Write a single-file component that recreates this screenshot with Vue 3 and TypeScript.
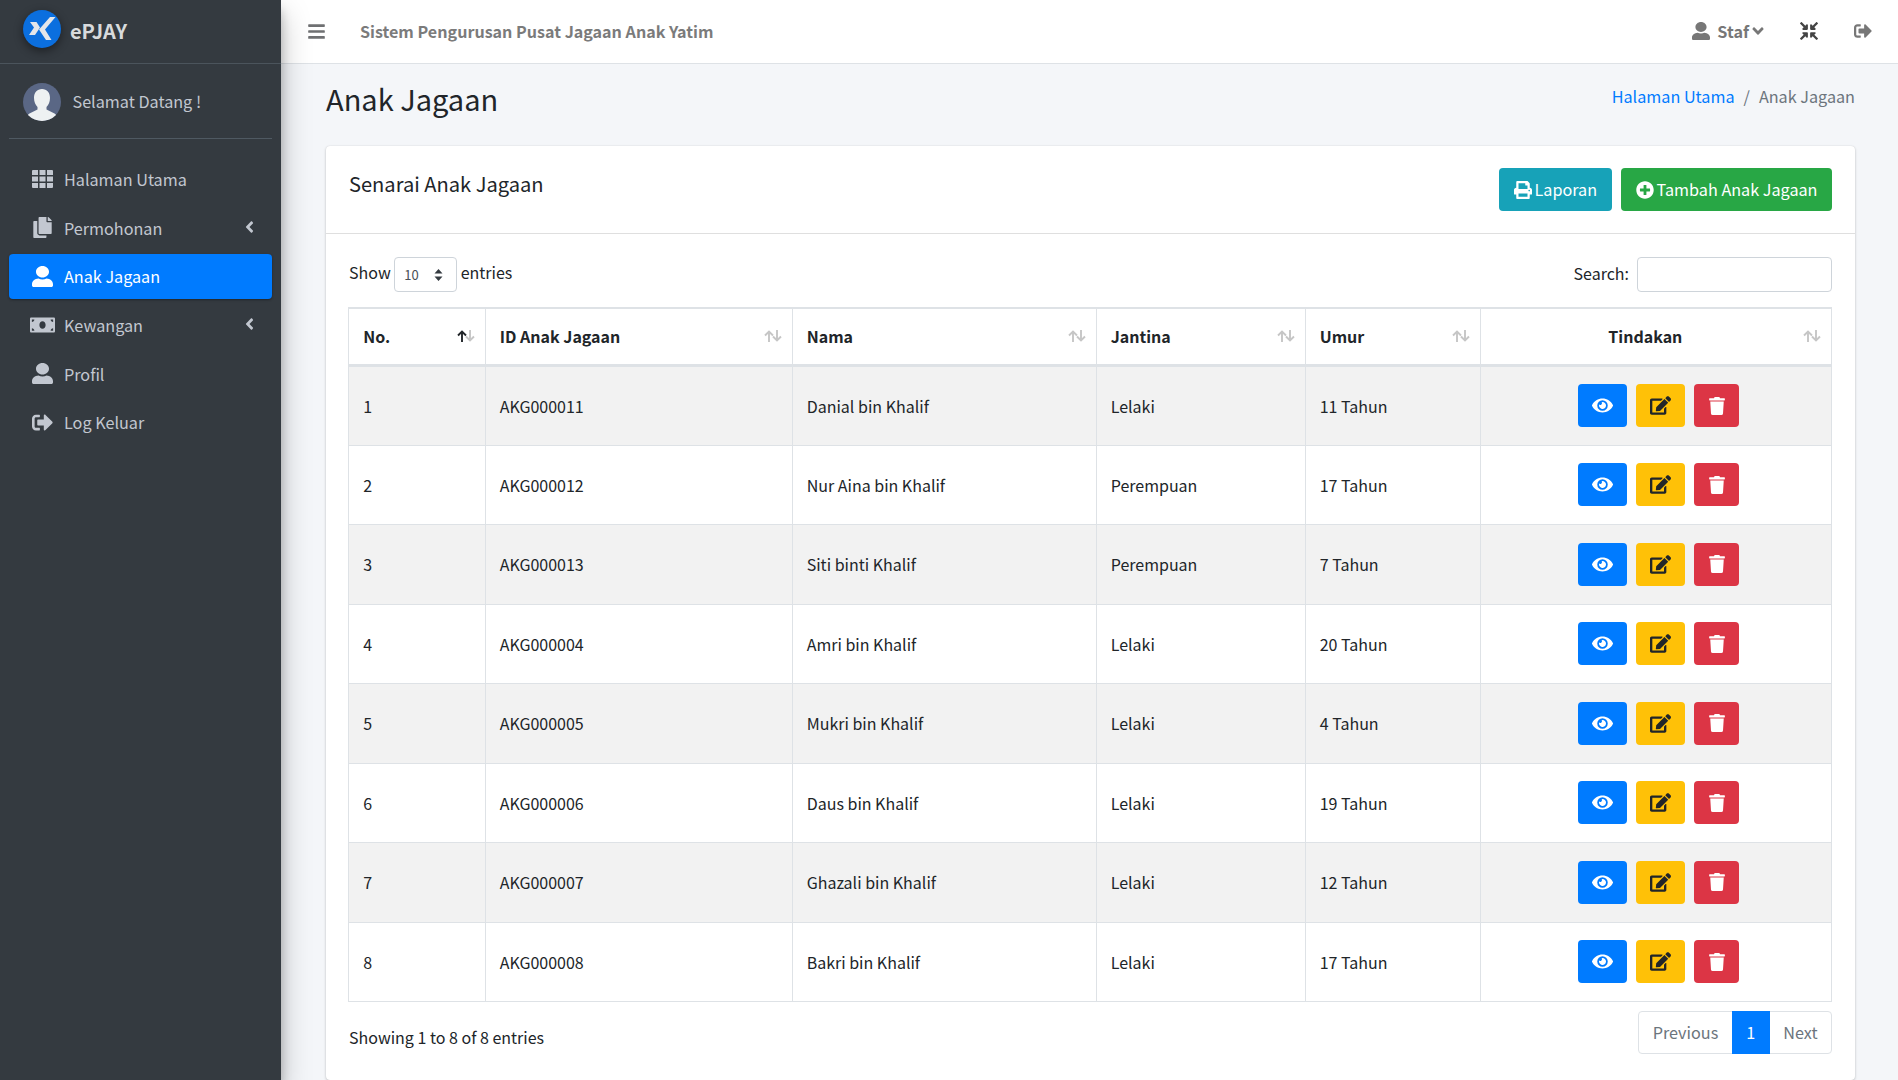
<script setup lang="ts">
type Icon = { vb: string; d: string }
const icons: Record<string, Icon> = {
  grid: { vb: '0 0 21 18', d: 'M0 1a1 1 0 0 1 1-1h5v5H0zM7.5 0h6v5h-6zM15 0h5a1 1 0 0 1 1 1v4h-6zM0 6.5h6v5H0zM7.5 6.5h6v5h-6zM15 6.5h6v5h-6zM0 13h6v5H1a1 1 0 0 1-1-1zM7.5 13h6v5h-6zM15 13h6v4a1 1 0 0 1-1 1h-5z' },
  copy: { vb: '0 0 448 512', d: 'M320 448v40c0 13.255-10.745 24-24 24H24c-13.255 0-24-10.745-24-24V120c0-13.255 10.745-24 24-24h72v296c0 30.879 25.121 56 56 56h168zm0-344V0H152c-13.255 0-24 10.745-24 24v368c0 13.255 10.745 24 24 24h272c13.255 0 24-10.745 24-24V128H344c-13.2 0-24-10.8-24-24zm120.971-31.029L375.029 7.029A24 24 0 0 0 358.059 0H352v96h96v-6.059a24 24 0 0 0-7.029-16.97z' },
  user: { vb: '0 0 20 20', d: 'M10 0c3.4 0 6.2 2.4 6.2 5.500S13.400 11 10 11 3.800 8.600 3.800 5.500 6.600 0 10 0zM6.200 12c1.100.6 2.400.9 3.800.9s2.700-.3 3.800-.9C17.300 12.200 20 14.500 20 17.200V18.500c0 .8-.7 1.500-1.500 1.500H1.500C.7 20 0 19.300 0 18.500v-1.300C0 14.500 2.700 12.200 6.200 12z' },
  money: { vb: '0 0 640 512', d: 'M608 64H32C14.33 64 0 78.33 0 96v320c0 17.67 14.33 32 32 32h576c17.67 0 32-14.33 32-32V96c0-17.67-14.33-32-32-32zM48 400v-64c35.35 0 64 28.65 64 64H48zm0-224v-64h64c0 35.35-28.65 64-64 64zm272 176c-44.19 0-80-42.99-80-96 0-53.02 35.82-96 80-96s80 42.98 80 96c0 53.03-35.83 96-80 96zm272 48h-64c0-35.35 28.65-64 64-64v64zm0-224c-35.35 0-64-28.65-64-64h64v64z' },
  signout: { vb: '0 0 512 512', d: 'M497 273L329 441c-15 15-41 4.5-41-17v-96H152c-13.3 0-24-10.7-24-24v-96c0-13.3 10.7-24 24-24h136V88c0-21.4 25.9-32 41-17l168 168c9.3 9.4 9.300 24.600 0 34zM192 436v-40c0-6.6-5.4-12-12-12H96c-17.700 0-32-14.300-32-32V160c0-17.700 14.300-32 32-32h84c6.600 0 12-5.400 12-12V76c0-6.600-5.400-12-12-12H96c-53 0-96 43-96 96v192c0 53 43 96 96 96h84c6.600 0 12-5.400 12-12z' },
  angleLeft: { vb: '0 0 256 512', d: 'M31.7 239l136-136c9.4-9.4 24.6-9.4 33.9 0l22.6 22.6c9.4 9.4 9.4 24.6 0 33.9L127.9 256l96.4 96.4c9.4 9.4 9.4 24.6 0 33.9L201.700 409c-9.400 9.400-24.600 9.400-33.900 0l-136-136c-9.500-9.400-9.500-24.600-.1-34z' },
  angleDown: { vb: '0 0 320 512', d: 'M143 352.3L7 216.3c-9.4-9.4-9.4-24.6 0-33.9l22.6-22.6c9.4-9.4 24.6-9.4 33.9 0l96.4 96.4 96.4-96.4c9.4-9.4 24.6-9.4 33.9 0l22.6 22.6c9.4 9.4 9.4 24.6 0 33.9l-136 136c-9.2 9.4-24.4 9.4-33.8 0z' },
  bars: { vb: '0 0 448 512', d: 'M16 132h416c8.837 0 16-7.163 16-16V76c0-8.837-7.163-16-16-16H16C7.163 60 0 67.163 0 76v40c0 8.837 7.163 16 16 16zm0 160h416c8.837 0 16-7.163 16-16v-40c0-8.837-7.163-16-16-16H16c-8.837 0-16 7.163-16 16v40c0 8.837 7.163 16 16 16zm0 160h416c8.837 0 16-7.163 16-16v-40c0-8.837-7.163-16-16-16H16c-8.837 0-16 7.163-16 16v40c0 8.837 7.163 16 16 16z' },
  compress: { vb: '0 0 512 512', d: 'M200 288H88c-21.4 0-32.1 25.8-17 41l32.9 31-99.2 99.3c-6.2 6.2-6.2 16.4 0 22.6l25.4 25.4c6.2 6.2 16.4 6.2 22.6 0L152 408l31.1 33c15.1 15.1 40.9 4.4 40.9-17V312c0-13.3-10.7-24-24-24zm112-64h112c21.4 0 32.1-25.9 17-41l-33-31 99.3-99.3c6.2-6.2 6.2-16.4 0-22.6L481.9 4.7c-6.2-6.2-16.4-6.2-22.6 0L360 104l-31.1-33C313.8 55.9 288 66.6 288 88v112c0 13.3 10.7 24 24 24zm96 136l33-31.1c15.1-15.1 4.4-40.9-17-40.9H312c-13.3 0-24 10.7-24 24v112c0 21.4 25.9 32.1 41 17l31-32.9 99.3 99.3c6.2 6.2 16.4 6.2 22.6 0l25.4-25.4c6.2-6.2 6.2-16.4 0-22.6L408 360zM183 71.1L152 104 52.7 4.7c-6.2-6.2-16.4-6.2-22.6 0L4.7 30.1c-6.2 6.2-6.2 16.4 0 22.6L104 152l-33 31.1C55.9 198.2 66.6 224 88 224h112c13.3 0 24-10.7 24-24V88c0-21.3-25.9-32-41-16.9z' },
  print: { vb: '0 0 512 512', d: 'M448 192V77.25c0-8.49-3.37-16.62-9.37-22.63L393.37 9.37c-6-6-14.14-9.37-22.63-9.37H96C78.33 0 64 14.33 64 32v160c-35.35 0-64 28.65-64 64v112c0 8.84 7.16 16 16 16h48v96c0 17.67 14.33 32 32 32h320c17.67 0 32-14.33 32-32v-96h48c8.84 0 16-7.16 16-16V256c0-35.35-28.65-64-64-64zm-64 256H128v-96h256v96zm0-224H128V64h192v48c0 8.84 7.16 16 16 16h48v96zm48 72c-13.25 0-24-10.75-24-24 0-13.27 10.75-24 24-24s24 10.73 24 24c0 13.25-10.75 24-24 24z' },
  plus: { vb: '0 0 512 512', d: 'M256 8C119 8 8 119 8 256s111 248 248 248 248-111 248-248S393 8 256 8zm144 276c0 6.6-5.4 12-12 12h-92v92c0 6.6-5.4 12-12 12h-56c-6.6 0-12-5.4-12-12v-92h-92c-6.6 0-12-5.4-12-12v-56c0-6.6 5.4-12 12-12h92v-92c0-6.6 5.4-12 12-12h56c6.6 0 12 5.4 12 12v92h92c6.6 0 12 5.4 12 12v56z' },
  eye: { vb: '0 0 576 512', d: 'M572.52 241.4C518.29 135.59 410.93 64 288 64S57.68 135.64 3.48 241.41a32.35 32.35 0 0 0 0 29.19C57.71 376.41 165.07 448 288 448s230.32-71.64 284.52-177.41a32.35 32.35 0 0 0 0-29.19zM288 400a144 144 0 1 1 144-144 143.93 143.93 0 0 1-144 144zm0-240a95.31 95.31 0 0 0-25.31 3.79 47.85 47.85 0 0 1-66.9 66.9A95.78 95.78 0 1 0 288 160z' },
  edit: { vb: '0 0 576 512', d: 'M402.6 83.2l90.2 90.2c3.8 3.8 3.8 10 0 13.8L274.4 405.6l-92.8 10.3c-12.4 1.4-22.9-9.1-21.5-21.5l10.3-92.8L388.8 83.2c3.8-3.8 10-3.8 13.8 0zm162-22.9l-48.8-48.8c-15.2-15.2-39.9-15.2-55.2 0l-35.4 35.4c-3.8 3.8-3.8 10 0 13.8l90.2 90.2c3.8 3.8 10 3.8 13.8 0l35.4-35.4c15.2-15.3 15.2-40 0-55.2zM384 346.2V448H64V128h229.8c3.2 0 6.2-1.3 8.5-3.5l40-40c7.6-7.6 2.2-20.5-8.5-20.5H48C21.5 64 0 85.5 0 112v352c0 26.5 21.5 48 48 48h352c26.5 0 48-21.5 48-48V306.2c0-10.7-12.9-16-20.5-8.5l-40 40c-2.2 2.3-3.5 5.3-3.5 8.5z' },
  trash: { vb: '0 0 448 512', d: 'M432 32H312l-9.4-18.7A24 24 0 0 0 281.1 0H166.8a23.72 23.72 0 0 0-21.4 13.3L136 32H16A16 16 0 0 0 0 48v32a16 16 0 0 0 16 16h416a16 16 0 0 0 16-16V48a16 16 0 0 0-16-16zM53.2 467a48 48 0 0 0 47.9 45h245.8a48 48 0 0 0 47.9-45L416 128H32z' },
}

const nav = [
  { label: 'Halaman Utama', icon: 'grid', w: 21, h: 18 },
  { label: 'Permohonan', icon: 'copy', w: 19, h: 21, caret: true },
  { label: 'Anak Jagaan', icon: 'user', w: 21, h: 21, active: true },
  { label: 'Kewangan', icon: 'money', w: 25, h: 20, caret: true },
  { label: 'Profil', icon: 'user', w: 21, h: 21 },
  { label: 'Log Keluar', icon: 'signout', w: 21, h: 21 },
]

const columns = [
  { label: 'No.', width: 136.5, active: true },
  { label: 'ID Anak Jagaan', width: 307 },
  { label: 'Nama', width: 304 },
  { label: 'Jantina', width: 209 },
  { label: 'Umur', width: 175 },
  { label: 'Tindakan', width: 351.5, center: true },
]

const rows = [
  ['1', 'AKG000011', 'Danial bin Khalif', 'Lelaki', '11 Tahun'],
  ['2', 'AKG000012', 'Nur Aina bin Khalif', 'Perempuan', '17 Tahun'],
  ['3', 'AKG000013', 'Siti binti Khalif', 'Perempuan', '7 Tahun'],
  ['4', 'AKG000004', 'Amri bin Khalif', 'Lelaki', '20 Tahun'],
  ['5', 'AKG000005', 'Mukri bin Khalif', 'Lelaki', '4 Tahun'],
  ['6', 'AKG000006', 'Daus bin Khalif', 'Lelaki', '19 Tahun'],
  ['7', 'AKG000007', 'Ghazali bin Khalif', 'Lelaki', '12 Tahun'],
  ['8', 'AKG000008', 'Bakri bin Khalif', 'Lelaki', '17 Tahun'],
]
</script>

<template>
  <div class="app">
    <aside class="sidebar">
      <div class="brand">
        <svg class="logo" viewBox="0 0 38 38" width="38" height="38">
          <circle cx="19" cy="19" r="19" fill="#0b6fdf" />
          <path d="M7 13h6.500l3.500 5.500-5 7.500H6l5-7.500z" fill="#e4e6ea" transform="translate(0 -1)" />
          <path d="M27 7h5.500L22 19.500 28.500 30H23l-7-10.500z" fill="#e4e6ea" />
        </svg>
        <span class="brand-text">ePJAY</span>
      </div>
      <div class="user-panel">
        <svg class="avatar" viewBox="0 0 38 38" width="38" height="38">
          <defs><clipPath id="av"><circle cx="19" cy="19" r="19" /></clipPath></defs>
          <g clip-path="url(#av)">
            <rect width="38" height="38" fill="#5a6785" />
            <path d="M19 6c5 0 8 3.500 8 9 0 4-1.500 7-3.500 9v2.500l8 4c1 .5 1.500 1 2 2.500-3 3-7 5-14.500 5s-11.500-2-14.500-5c.5-1.500 1-2 2-2.500l8-4V24c-2-2-3.500-5-3.500-9 0-5.500 3-9 8-9z" fill="#eef1f2" />
          </g>
        </svg>
        <span>Selamat Datang !</span>
      </div>
      <nav class="nav">
        <a v-for="item in nav" :key="item.label" class="nav-link" :class="{ active: item.active }">
          <span class="nav-icon">
            <svg :viewBox="icons[item.icon].vb" :width="item.w" :height="item.h"><path :d="icons[item.icon].d" fill="currentColor" /></svg>
          </span>
          <span class="nav-label">{{ item.label }}</span>
          <svg v-if="item.caret" class="caret" :viewBox="icons.angleLeft.vb" width="9" height="18"><path :d="icons.angleLeft.d" fill="currentColor" /></svg>
        </a>
      </nav>
    </aside>

    <div class="main">
      <header class="navbar">
        <svg class="bars" :viewBox="icons.bars.vb" width="17" height="19"><path :d="icons.bars.d" fill="currentColor" /></svg>
        <span class="system-title">Sistem Pengurusan Pusat Jagaan Anak Yatim</span>
        <div class="nav-right">
          <svg class="nav-user" :viewBox="icons.user.vb" width="18" height="18"><path :d="icons.user.d" fill="currentColor" /></svg>
          <span class="staf">Staf</span>
          <svg class="staf-caret" :viewBox="icons.angleDown.vb" width="12" height="18"><path :d="icons.angleDown.d" fill="currentColor" /></svg>
          <svg class="compress" :viewBox="icons.compress.vb" width="18" height="18"><path :d="icons.compress.d" fill="currentColor" /></svg>
          <svg class="logout" :viewBox="icons.signout.vb" width="18" height="18"><path :d="icons.signout.d" fill="currentColor" /></svg>
        </div>
      </header>

      <main class="content">
        <div class="page-head">
          <h1>Anak Jagaan</h1>
          <div class="breadcrumb"><a>Halaman Utama</a><span class="sep">/</span><span>Anak Jagaan</span></div>
        </div>

        <section class="card">
          <div class="card-header">
            <h3>Senarai Anak Jagaan</h3>
            <div class="actions">
              <button class="btn info"><svg :viewBox="icons.print.vb" width="18" height="18"><path :d="icons.print.d" fill="currentColor" /></svg>Laporan</button>
              <button class="btn success"><svg :viewBox="icons.plus.vb" width="18" height="18"><path :d="icons.plus.d" fill="currentColor" /></svg>Tambah Anak Jagaan</button>
            </div>
          </div>
          <div class="card-body">
            <div class="controls">
              <div class="length">
                Show
                <div class="select">
                  <span>10</span>
                  <svg viewBox="0 0 8 12" width="9" height="12"><path d="M4 0l4 4.500H0zM4 12L0 7.500h8z" fill="#343a40" /></svg>
                </div>
                entries
              </div>
              <div class="search">Search:<div class="input"></div></div>
            </div>

            <table class="table">
              <colgroup><col v-for="c in columns" :key="c.label" :style="{ width: c.width + 'px' }" /></colgroup>
              <thead>
                <tr>
                  <th v-for="c in columns" :key="c.label" :class="{ center: c.center }">
                    {{ c.label }}
                    <svg class="sort" viewBox="0 0 18 12" width="18" height="12">
                      <path d="M5 12V1.500M1 5.500l4-4 4 4" fill="none" :stroke="c.active ? '#212529' : '#c6c6c6'" stroke-width="1.900" />
                      <path d="M13 0v10.500M9 6.500l4 4 4-4" fill="none" stroke="#c6c6c6" stroke-width="1.900" />
                    </svg>
                  </th>
                </tr>
              </thead>
              <tbody>
                <tr v-for="r in rows" :key="r[0]">
                  <td v-for="(v, i) in r" :key="i">{{ v }}</td>
                  <td class="tools">
                    <button class="tool view"><svg :viewBox="icons.eye.vb" width="21" height="19"><path :d="icons.eye.d" fill="currentColor" /></svg></button>
                    <button class="tool edit"><svg :viewBox="icons.edit.vb" width="21" height="19"><path :d="icons.edit.d" fill="currentColor" /></svg></button>
                    <button class="tool del"><svg :viewBox="icons.trash.vb" width="16" height="18"><path :d="icons.trash.d" fill="currentColor" /></svg></button>
                  </td>
                </tr>
              </tbody>
            </table>

            <div class="table-foot">
              <div class="info-text">Showing 1 to 8 of 8 entries</div>
              <div class="pagination"><span class="pg prev">Previous</span><span class="pg cur">1</span><span class="pg next">Next</span></div>
            </div>
          </div>
        </section>
      </main>
    </div>
  </div>
</template>

<style>
html, body { margin: 0; padding: 0; overflow: hidden; }
</style>

<style scoped>
* { box-sizing: border-box; }
.app {
  display: flex;
  height: 1080px;
  overflow: hidden;
  background: #f4f6f9;
  color: #212529;
  font-family: "Noto Sans CJK SC", "Noto Sans", sans-serif;
  font-size: 16.200px;
  line-height: 24px;
}
.sidebar {
  width: 281px;
  flex: none;
  background: #343a40;
  color: #c2c7d0;
  box-shadow: 0 14px 28px rgba(0,0,0,.25), 0 10px 10px rgba(0,0,0,.22);
  z-index: 2;
}
.brand {
  height: 64px;
  border-bottom: 1px solid #4b545c;
  display: flex;
  align-items: flex-start;
  padding: 10px 0 0 23px;
}
.logo { filter: drop-shadow(0 3px 5px rgba(0,0,0,.45)); flex: none; }
.brand-text { font-size: 20px; font-weight: 700; color: #d8dadc; margin: 9px 0 0 9px; }
.user-panel {
  height: 75px;
  margin: 0 9px;
  border-bottom: 1px solid #4f5962;
  display: flex;
  align-items: center;
  padding: 0 0 0 14px;
  gap: 11.500px;
}
.avatar { flex: none; margin-top: 1px; }
.nav { padding: 17.800px 9px 0; display: flex; flex-direction: column; gap: 3.6px; }
.nav-link {
  height: 45px;
  border-radius: 4px;
  display: flex;
  align-items: center;
  padding: 0 18px 0 21px;
  color: #c2c7d0;
}
.nav-link.active { background: #007bff; color: #fff; box-shadow: 0 1px 3px rgba(0,0,0,.12), 0 1px 2px rgba(0,0,0,.24); }
.nav-icon { width: 25px; margin-right: 9px; flex: none; display: flex; align-items: center; justify-content: center; }
.nav-label { flex: 1; }
.caret { flex: none; margin-top: -2px; }

.main { flex: 1; min-width: 0; display: flex; flex-direction: column; }
.navbar {
  height: 64px;
  flex: none;
  background: #fff;
  border-bottom: 1px solid #dee2e6;
  display: flex;
  align-items: center;
  padding: 0 0 1px 27px;
  color: rgba(0,0,0,.5);
}
.bars { color: #6f7072; flex: none; }
.system-title { margin-left: 35px; font-weight: 700; font-size: 16.100px; color: #7b7b7b; }
.nav-right { margin-left: auto; display: flex; align-items: center; color: #777; }
.staf { margin-left: 7px; font-weight: 700; }
.staf-caret { margin-left: 3px; }
.compress { margin-left: 36px; color: #444; }
.logout { margin-left: 36px; margin-right: 26px; }

.content { flex: 1; padding: 0 43px 0 45px; }
.page-head { display: flex; justify-content: space-between; align-items: flex-start; height: 82px; }
h1 { margin: 16px 0 0; font-size: 29px; font-weight: 400; line-height: 36px; }
.breadcrumb { margin-top: 20px; color: #6c757d; display: flex; }
.breadcrumb a { color: #007bff; }
.sep { margin: 0 9px; }

.card {
  background: #fff;
  border-radius: 4px;
  box-shadow: 0 0 1px rgba(0,0,0,.125), 0 1px 3px rgba(0,0,0,.2);
  height: 934px;
}
.card-header {
  height: 88px;
  border-bottom: 1px solid rgba(0,0,0,.125);
  display: flex;
  justify-content: space-between;
  padding: 22px 23px 0;
}
h3 { margin: 1px 0 0; font-size: 20.100px; font-weight: 400; line-height: 30px; color: #212529; }
.actions { display: flex; gap: 9px; }
.btn {
  height: 43px;
  border: 0;
  border-radius: 4px;
  color: #fff;
  font: inherit;
  padding: 0 15px 2px;
  display: flex;
  align-items: center;
  gap: 3px;
}
.btn svg { margin-top: 2px; }
.info { background: #17a2b8; }
.success { background: #28a745; padding: 0 14.500px 2px; }
.card-body { padding: 23px 23px 0; }
.controls { display: flex; justify-content: space-between; height: 50px; font-size: 16px; }
.length, .search { display: flex; align-items: flex-start; height: 35px; }
.length { padding-top: 3px; }
.search { padding-top: 4px; }
.select {
  width: 63px;
  height: 35px;
  margin: -3px 3.500px 0;
  border: 1px solid #ced4da;
  border-radius: 4px;
  display: flex;
  align-items: center;
  justify-content: space-between;
  padding: 0 13px 0 9px;
  font-size: 13px;
  color: #495057;
}
.input { width: 195px; height: 35px; margin: -4px 0 0 8px; border: 1px solid #ced4da; border-radius: 4px; }
.table { width: 1483px; margin-left: -1px; table-layout: fixed; border-collapse: collapse; font-size: 16px; }
.table th, .table td { border: 1px solid #dee2e6; padding: 0 14.200px; text-align: left; font-weight: 400; }
.table th { position: relative; height: 57px; border-top-width: 2px; border-bottom-width: 3px; font-weight: 700; }
.table th.center { text-align: center; padding-right: 35px; }
.table td { height: 79px; }
.table tbody tr:nth-child(odd) td { height: 80px; }
.table tbody tr:nth-child(odd) { background: #f2f2f2; }
.sort { position: absolute; right: 10px; top: 21px; }
.table td.tools { text-align: center; padding: 0 0 0 6px; white-space: nowrap; font-size: 0; }
.tool {
  width: 49px;
  height: 43px;
  border: 0;
  border-radius: 4px;
  margin: 0 4.500px;
  padding: 0;
  vertical-align: middle;
  display: inline-flex;
  align-items: center;
  justify-content: center;
}
.view { background: #007bff; color: #fff; }
.edit { background: #ffc107; color: #212529; }
.del { background: #dc3545; color: #fff; width: 45px; }
.table-foot { display: flex; justify-content: space-between; padding-top: 9px; }
.info-text { padding-top: 14px; font-size: 16px; }
.pagination { display: flex; height: 43px; border: 1px solid #dee2e6; border-radius: 4px; color: #6c757d; }
.pg { display: flex; align-items: center; padding: 0 13.500px; }
.pg.cur { background: #007bff; color: #fff; margin: -1px 0; height: 43px; width: 38px; justify-content: center; padding: 0; }
</style>
